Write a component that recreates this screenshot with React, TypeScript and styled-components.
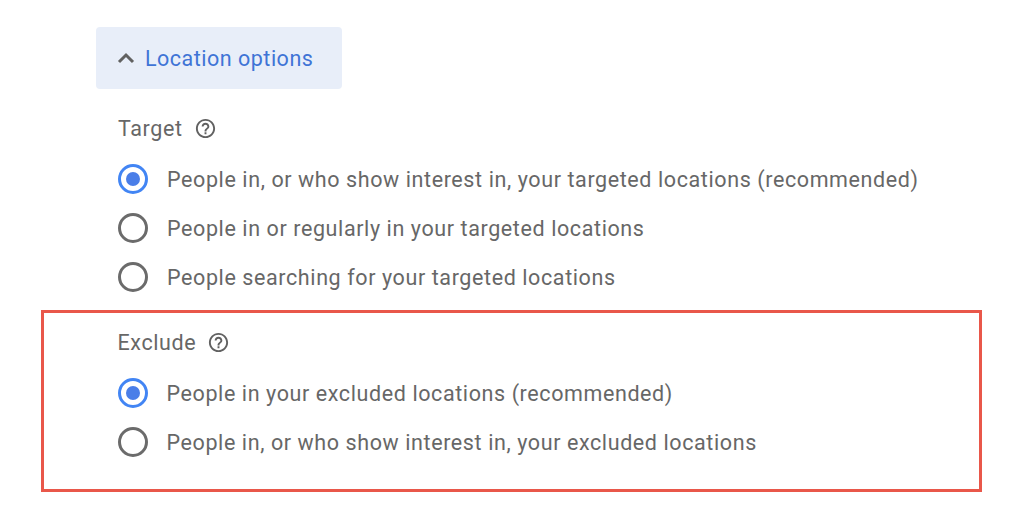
import React from "react";
import styled, { createGlobalStyle } from "styled-components";

const Global = createGlobalStyle`
  html, body { margin: 0; padding: 0; background: #ffffff; }
  body { font-family: Roboto, "Noto Sans", Arial, sans-serif; }
`;

const Page = styled.div`
  width: 1030px;
  height: 512px;
  box-sizing: border-box;
  padding-top: 27px;
  display: flex;
  flex-direction: column;
  background: #fff;
`;

const HeaderButton = styled.div`
  margin-left: 96px;
  width: 246px;
  height: 62px;
  box-sizing: border-box;
  background: #e8eef9;
  border-radius: 4px;
  display: flex;
  align-items: center;
  padding-left: 21px;
  gap: 10px;
  color: #3f74d6;
  font-size: 21.5px;
  letter-spacing: 0.5px;
`;

const Section = styled.div`
  padding-left: 118px;
  margin-top: 25px;
  display: flex;
  flex-direction: column;
`;

const Label = styled.div`
  display: flex;
  align-items: center;
  gap: 11px;
  height: 28px;
  font-size: 21.5px;
  letter-spacing: 0.6px;
  color: #676767;
`;

const Options = styled.div`
  display: flex;
  flex-direction: column;
  gap: 19px;
  margin-top: 22px;
`;

const Row = styled.div`
  display: flex;
  align-items: center;
  gap: 19px;
  height: 30px;
  font-size: 21.5px;
  letter-spacing: 0.6px;
  color: #676767;
  white-space: nowrap;
`;

const Radio = styled.span<{ $checked?: boolean }>`
  width: 30px;
  height: 30px;
  box-sizing: border-box;
  border-radius: 50%;
  border: 3px solid ${(p) => (p.$checked ? "#4285f4" : "#6b6b6b")};
  display: flex;
  align-items: center;
  justify-content: center;
  flex-shrink: 0;
  &::after {
    content: "";
    width: 14px;
    height: 14px;
    border-radius: 50%;
    background: #4a7ee8;
    display: ${(p) => (p.$checked ? "block" : "none")};
  }
`;

const ExcludeBox = styled.div`
  margin-left: 41px;
  margin-top: 18px;
  width: 941px;
  height: 182px;
  box-sizing: border-box;
  border: 3.5px solid #e9574a;
  padding: 15px 0 0 73.5px;
  display: flex;
  flex-direction: column;
`;

const Chevron = () => (
  <svg width="18" height="12" viewBox="0 0 18 12">
    <path d="M2 10 L9 3 L16 10" fill="none" stroke="#616161" strokeWidth="3" />
  </svg>
);

const HelpIcon = () => (
  <svg width="23" height="23" viewBox="0 0 24 24">
    <path
      fill="#616161"
      d="M11 18h2v-2h-2v2zm1-16C6.48 2 2 6.48 2 12s4.48 10 10 10 10-4.48 10-10S17.52 2 12 2zm0 18c-4.41 0-8-3.590-8-8s3.59-8 8-8 8 3.59 8 8-3.59 8-8 8zm0-14c-2.21 0-4 1.79-4 4h2c0-1.1.9-2 2-2s2 .9 2 2c0 2-3 1.75-3 5h2c0-2.25 3-2.5 3-5 0-2.21-1.79-4-4-4z"
    />
  </svg>
);

const Option = ({ checked, children }: { checked?: boolean; children: React.ReactNode }) => (
  <Row>
    <Radio $checked={checked} />
    <span>{children}</span>
  </Row>
);

export default function App() {
  return (
    <>
      <Global />
      <Page>
        <HeaderButton>
          <Chevron />
          <span>Location options</span>
        </HeaderButton>
        <Section>
          <Label>
            Target <HelpIcon />
          </Label>
          <Options>
            <Option checked>
              People in, or who show interest in, your targeted locations (recommended)
            </Option>
            <Option>People in or regularly in your targeted locations</Option>
            <Option>People searching for your targeted locations</Option>
          </Options>
        </Section>
        <ExcludeBox>
          <Label>
            Exclude <HelpIcon />
          </Label>
          <Options>
            <Option checked>People in your excluded locations (recommended)</Option>
            <Option>People in, or who show interest in, your excluded locations</Option>
          </Options>
        </ExcludeBox>
      </Page>
    </>
  );
}
